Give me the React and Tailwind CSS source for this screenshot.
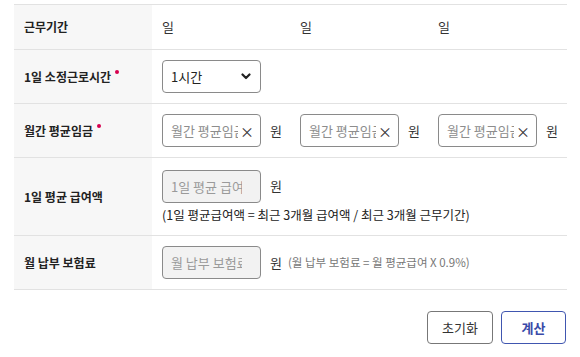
import React from 'react';

const font = { fontFamily: '"Noto Sans CJK KR", "Noto Sans", sans-serif' };

const Required = () => (
  <span className="inline-block w-[4px] h-[4px] rounded-full bg-[#d6004f] ml-[4px] -translate-y-[5px]"></span>
);

const Row = ({ label, required, children, className = '' }) => (
  <div className={`grid grid-cols-[138px_1fr] border-b border-[#e2e2e2] ${className}`}>
    <div className="bg-[#f7f7f7] flex items-center pl-[10px] text-[12px] font-bold text-[#222]">
      {label}
      {required && <Required />}
    </div>
    <div className="flex items-center pl-[10px]">{children}</div>
  </div>
);

const ClearInput = () => (
  <div className="flex items-center w-[99px] h-[33px] border border-[#8a8a8a] rounded-[4px] bg-white pl-[8px] pr-[6px]">
    <input
      placeholder="월간 평균임금"
      className="flex-1 min-w-0 text-[13px] text-[#222] placeholder-[#8d8d8d] outline-none bg-transparent"
    />
    <span className="text-[14px] text-[#333] ml-[2px] leading-none">×</span>
  </div>
);

export default function App() {
  return (
    <div className="w-[580px] h-[357px] bg-white pt-[4px] px-[14px] text-[#222]" style={font}>
      <div className="w-[553px] border-t border-[#e2e2e2]">
        <Row label="근무기간" className="h-[45px]">
          <div className="flex text-[13px] text-[#333]">
            <span className="w-[138px]">일</span>
            <span className="w-[138px]">일</span>
            <span>일</span>
          </div>
        </Row>

        <Row label="1일 소정근로시간" required className="h-[54px]">
          <div className="relative w-[99px] h-[33px] border border-[#8a8a8a] rounded-[4px] flex items-center pl-[8px] text-[13px]">
            1시간
            <svg className="absolute right-[9px] top-[12px]" width="10" height="7" viewBox="0 0 10 7" fill="none">
              <path d="M1.5 1.5L5 5L8.5 1.5" stroke="#222" strokeWidth="2.2" strokeLinecap="round" strokeLinejoin="round" />
            </svg>
          </div>
        </Row>

        <Row label="월간 평균임금" required className="h-[54px]">
          <div className="flex">
            {[0, 1, 2].map((i) => (
              <div key={i} className="flex items-center w-[138px]">
                <ClearInput />
                <span className="ml-[9px] text-[13px] text-[#333]">원</span>
              </div>
            ))}
          </div>
        </Row>

        <Row label="1일 평균 급여액" className="h-[78px]">
          <div className="flex flex-col gap-[3px] pt-[1px]">
            <div className="flex items-center">
              <input
                disabled
                placeholder="1일 평균 급여액"
                className="w-[99px] h-[33px] border border-[#8a8a8a] rounded-[4px] bg-[#f2f2f2] pl-[8px] pr-[18px] text-[13px] placeholder-[#9a9a9a]"
              />
              <span className="ml-[9px] text-[13px] text-[#333]">원</span>
            </div>
            <div className="text-[12.5px] text-[#222]">(1일 평균급여액 = 최근 3개월 급여액 / 최근 3개월 근무기간)</div>
          </div>
        </Row>

        <Row label="월 납부 보험료" className="h-[54px]">
          <div className="flex items-center">
            <input
              disabled
              placeholder="월 납부 보험료"
              className="w-[99px] h-[33px] border border-[#8a8a8a] rounded-[4px] bg-[#f2f2f2] pl-[8px] pr-[18px] text-[13px] placeholder-[#9a9a9a]"
            />
            <span className="ml-[9px] text-[13px] text-[#333]">원</span>
            <span className="ml-[6px] text-[11.5px] text-[#777]">(월 납부 보험료 = 월 평균급여 X 0.9%)</span>
          </div>
        </Row>

        <div className="flex justify-end gap-[8px] mt-[21px] pr-[1px]">
          <button className="w-[66px] h-[33px] border border-[#777] rounded-[4px] text-[13px] text-[#333] bg-white">
            초기화
          </button>
          <button className="w-[65px] h-[33px] border border-[#4056b0] rounded-[4px] text-[13px] font-bold text-[#3a4aa8] bg-white">
            계산
          </button>
        </div>
      </div>
    </div>
  );
}
